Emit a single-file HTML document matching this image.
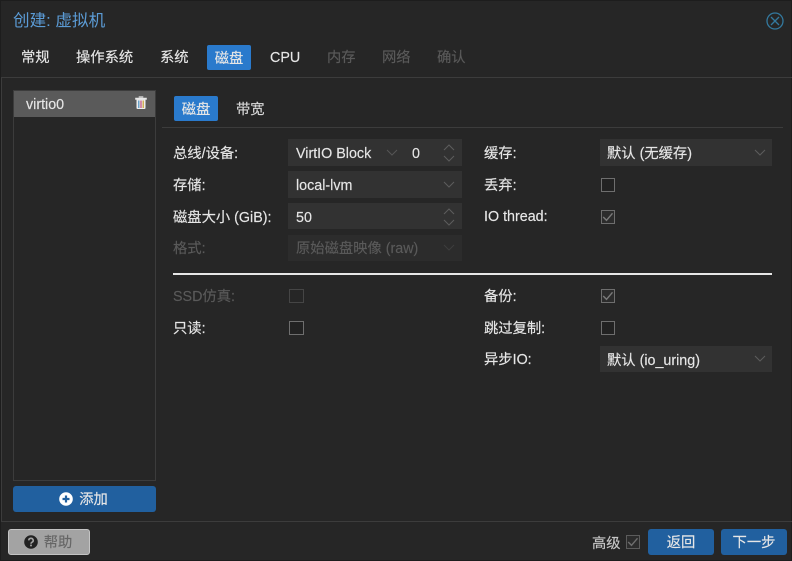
<!DOCTYPE html>
<html><head><meta charset="utf-8"><style>
html,body{margin:0;padding:0;width:792px;height:561px;overflow:hidden;background:#262626}
body{position:relative;font-family:"Liberation Sans","WenQuanYi Zen Hei","Noto Sans CJK SC",sans-serif;font-size:14.3px;color:#e6e6e6;-webkit-text-stroke:.15px currentColor}
div,span.a{position:absolute;box-sizing:border-box}
.t{white-space:nowrap;line-height:20px;height:20px;margin-top:1px}
.f{background:#323232;height:27px;color:#e6e6e6;line-height:31px;padding-left:8px;white-space:nowrap}
.btn{border-radius:3px;text-align:center;color:#e6e6e6;white-space:nowrap;padding-top:1px}
.cb{width:14px;height:14px;border:1px solid #6e6e6e;background:#222}
svg{position:absolute;display:block}
.dis{color:#5a5a5a}
</style></head><body>
<div style="left:0;top:0;width:792px;height:561px;border:1px solid #1d1d1d"></div>
<div style="left:1px;top:77px;width:791px;height:445px;border:1px solid #3c3c3c;border-right:none"></div>
<div class="t" style="left:13px;top:10px;font-size:16.6px;color:#5b9bd5;-webkit-text-stroke:0">创建: 虚拟机</div>
<svg style="left:766px;top:12px" width="18" height="18" viewBox="0 0 18 18" fill="none" stroke="#33799f" stroke-width="1.3"><circle cx="9" cy="9" r="8"/><path d="M5 5l8 8M13 5l-8 8"/></svg>

<div class="t" style="left:21px;top:47px">常规</div>
<div class="t" style="left:76px;top:47px">操作系统</div>
<div class="t" style="left:160px;top:47px">系统</div>
<div class="btn" style="left:207px;top:45px;width:44px;height:25px;line-height:26px;background:#2a7acc;border-radius:2px">磁盘</div>
<div class="t" style="left:270px;top:47px">CPU</div>
<div class="t dis" style="left:327px;top:47px">内存</div>
<div class="t dis" style="left:382px;top:47px">网络</div>
<div class="t dis" style="left:437px;top:47px">确认</div>

<div style="left:13px;top:90px;width:143px;height:391px;border:1px solid #3c3c3c"></div>
<div style="left:14px;top:91px;width:141px;height:26px;background:#5a5a5a"></div>
<div class="t" style="left:26px;top:94px">virtio0</div>
<svg style="left:135px;top:96px" width="12" height="13" viewBox="0 0 12 13"><path d="M4 1.5V.7h4v.8M.5 2h11v1.4H.5z" fill="#e8e8e8" stroke="#e8e8e8" stroke-width=".6"/><path d="M1.5 3.5h9V12a1 1 0 0 1-1 1h-7a1 1 0 0 1-1-1z" fill="#eee"/><path d="M3.8 4.5V12" stroke="#4a90c0" stroke-width="1.2"/><path d="M6 4.5V12" stroke="#c04a80" stroke-width="1.2"/><path d="M8.2 4.5V12" stroke="#c8a030" stroke-width="1.2"/></svg>

<div class="btn" style="left:13px;top:486px;width:143px;height:26px;background:#21609f;line-height:27px;padding-left:18px">添加</div>
<svg style="left:59px;top:492px" width="14" height="14" viewBox="0 0 14 14"><circle cx="7" cy="7" r="6.8" fill="#fff"/><path d="M7 3.5v7M3.5 7h7" stroke="#21609f" stroke-width="2.2"/></svg>

<div class="btn" style="left:174px;top:96px;width:44px;height:25px;line-height:26px;background:#2a7acc;border-radius:2px">磁盘</div>
<div class="t" style="left:236px;top:99px;color:#d8d8d8">带宽</div>
<div style="left:162px;top:127px;width:621px;height:1px;background:#3c3c3c"></div>

<div class="t" style="left:173px;top:143px">总线/设备:</div>
<div class="t" style="left:173px;top:175px">存储:</div>
<div class="t" style="left:173px;top:207px">磁盘大小 (GiB):</div>
<div class="t dis" style="left:173px;top:238px">格式:</div>

<div class="f" style="left:288px;top:139px;width:174px">VirtIO Block</div>
<div class="t" style="left:412px;top:143px">0</div>
<svg style="left:386px;top:149px" width="12" height="7" viewBox="0 0 12 7" fill="none" stroke="#555" stroke-width="1.1"><path d="M1 1l5 5 5-5"/></svg>
<svg style="left:443px;top:143px" width="12" height="20" viewBox="0 0 12 20" fill="none" stroke="#5c5c5c" stroke-width="1.1"><path d="M1 7l5-5 5 5M1 13l5 5 5-5"/></svg>

<div class="f" style="left:288px;top:171px;width:174px">local-lvm</div>
<svg style="left:443px;top:181px" width="12" height="7" viewBox="0 0 12 7" fill="none" stroke="#5c5c5c" stroke-width="1.1"><path d="M1 1l5 5 5-5"/></svg>

<div class="f" style="left:288px;top:203px;width:174px;height:26px;line-height:30px">50</div>
<svg style="left:443px;top:207px" width="12" height="20" viewBox="0 0 12 20" fill="none" stroke="#5c5c5c" stroke-width="1.1"><path d="M1 7l5-5 5 5M1 13l5 5 5-5"/></svg>

<div class="f dis" style="left:288px;top:235px;width:174px;height:26px;line-height:28px;background:#2c2c2c;color:#5a5a5a">原始磁盘映像 (raw)</div>
<svg style="left:443px;top:244px" width="12" height="7" viewBox="0 0 12 7" fill="none" stroke="#3e3e3e" stroke-width="1.1"><path d="M1 1l5 5 5-5"/></svg>

<div class="t" style="left:484px;top:143px">缓存:</div>
<div class="t" style="left:484px;top:175px">丢弃:</div>
<div class="t" style="left:484px;top:206px">IO thread:</div>
<div class="f" style="left:600px;top:139px;width:172px;padding-left:7px">默认 (无缓存)</div>
<svg style="left:754px;top:149px" width="12" height="7" viewBox="0 0 12 7" fill="none" stroke="#5c5c5c" stroke-width="1.1"><path d="M1 1l5 5 5-5"/></svg>
<div class="cb" style="left:601px;top:178px"></div>
<div class="cb" style="left:601px;top:210px;background:#2c2c2c"></div>
<svg style="left:601px;top:210px" width="14" height="14" viewBox="0 0 14 14" fill="none" stroke="#7a7a7a" stroke-width="1.4"><path d="M2.2 7l3.3 3.3 6-7"/></svg>

<div style="left:173px;top:273px;width:599px;height:2px;background:#e6e6e6"></div>

<div class="t dis" style="left:173px;top:286px">SSD仿真:</div>
<div class="t" style="left:173px;top:318px">只读:</div>
<div class="cb" style="left:289px;top:289px;width:15px;border-color:#454545;background:#262626"></div>
<div class="cb" style="left:289px;top:321px;width:15px"></div>
<div class="t" style="left:484px;top:286px">备份:</div>
<div class="t" style="left:484px;top:318px">跳过复制:</div>
<div class="t" style="left:484px;top:349px">异步IO:</div>
<div class="cb" style="left:601px;top:289px;background:#2c2c2c"></div>
<svg style="left:601px;top:289px" width="14" height="14" viewBox="0 0 14 14" fill="none" stroke="#7a7a7a" stroke-width="1.4"><path d="M2.2 7l3.3 3.3 6-7"/></svg>
<div class="cb" style="left:601px;top:321px"></div>
<div class="f" style="left:600px;top:346px;width:172px;height:26px;line-height:30px;padding-left:7px">默认 (io_uring)</div>
<svg style="left:754px;top:355px" width="12" height="7" viewBox="0 0 12 7" fill="none" stroke="#5c5c5c" stroke-width="1.1"><path d="M1 1l5 5 5-5"/></svg>

<div class="btn" style="left:8px;top:529px;width:82px;height:26px;background:#a3a3a3;border:1px solid #c4c4c4;line-height:25px;color:#666;padding-left:18px">帮助</div>
<svg style="left:24px;top:535px" width="14" height="14" viewBox="0 0 14 14"><circle cx="7" cy="7" r="6.8" fill="#222"/><path d="M4.8 5.4a2.2 2.1 0 1 1 3.3 1.8c-.8.5-1.1.8-1.1 1.5" fill="none" stroke="#a3a3a3" stroke-width="1.6"/><rect x="6.1" y="9.6" width="1.8" height="1.7" fill="#a3a3a3"/></svg>
<div class="t" style="left:592px;top:533px;color:#c8c8c8">高级</div>
<div class="cb" style="left:626px;top:535px;background:#2c2c2c;border-color:#5c5c5c"></div>
<svg style="left:626px;top:535px" width="14" height="14" viewBox="0 0 14 14" fill="none" stroke="#6e6e6e" stroke-width="1.4"><path d="M2.2 7l3.3 3.3 6-7"/></svg>
<div class="btn" style="left:648px;top:529px;width:66px;height:26px;line-height:27px;background:#21609f">返回</div>
<div class="btn" style="left:721px;top:529px;width:66px;height:26px;line-height:27px;background:#21609f">下一步</div>
</body></html>
